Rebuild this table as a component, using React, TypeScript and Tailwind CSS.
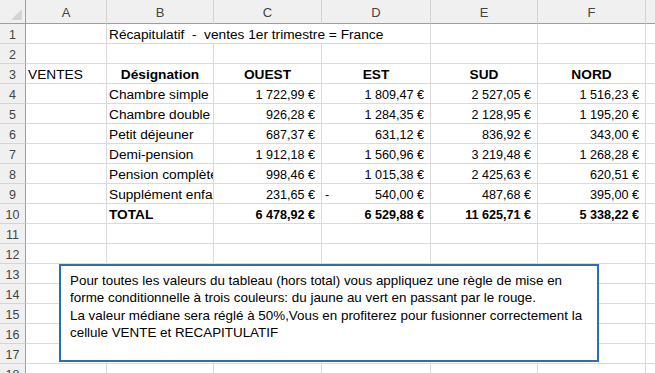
import React from "react";

type Cell = {
  text?: string;
  bold?: boolean;
  align?: "left" | "right" | "center";
  span?: number;
  dash?: boolean;
};

const cols = ["A", "B", "C", "D", "E", "F"];

const money = (v: string, bold = false, dash = false): Cell => ({
  text: v,
  align: "right",
  bold,
  dash,
});

// rows 1..18, each one holds cells for A..F
const rows: Cell[][] = [
  [{}, { text: "Récapitulatif  -  ventes 1er trimestre = France", span: 3 }, {}, {}],
  [{}, {}, {}, {}, {}, {}],
  [
    { text: "VENTES" },
    { text: "Désignation", bold: true, align: "center" },
    { text: "OUEST", bold: true, align: "center" },
    { text: "EST", bold: true, align: "center" },
    { text: "SUD", bold: true, align: "center" },
    { text: "NORD", bold: true, align: "center" },
  ],
  [{}, { text: "Chambre simple" }, money("1 722,99 €"), money("1 809,47 €"), money("2 527,05 €"), money("1 516,23 €")],
  [{}, { text: "Chambre double" }, money("926,28 €"), money("1 284,35 €"), money("2 128,95 €"), money("1 195,20 €")],
  [{}, { text: "Petit déjeuner" }, money("687,37 €"), money("631,12 €"), money("836,92 €"), money("343,00 €")],
  [{}, { text: "Demi-pension" }, money("1 912,18 €"), money("1 560,96 €"), money("3 219,48 €"), money("1 268,28 €")],
  [{}, { text: "Pension complète" }, money("998,46 €"), money("1 015,38 €"), money("2 425,63 €"), money("620,51 €")],
  [{}, { text: "Supplément enfant" }, money("231,65 €"), money("540,00 €", false, true), money("487,68 €"), money("395,00 €")],
  [{}, { text: "TOTAL", bold: true }, money("6 478,92 €", true), money("6 529,88 €", true), money("11 625,71 €", true), money("5 338,22 €", true)],
  [{}, {}, {}, {}, {}, {}],
  [{}, {}, {}, {}, {}, {}],
  [{}, {}, {}, {}, {}, {}],
  [{}, {}, {}, {}, {}, {}],
  [{}, {}, {}, {}, {}, {}],
  [{}, {}, {}, {}, {}, {}],
  [{}, {}, {}, {}, {}, {}],
  [{}, {}, {}, {}, {}, {}],
];

function SheetCell({ cell }: { cell: Cell }) {
  const span = cell.span === 3 ? "col-span-3" : "";
  const justify =
    cell.align === "right"
      ? "justify-end pr-[6px]"
      : cell.align === "center"
      ? "justify-center"
      : "justify-start pl-[2px]";
  const isNumber = cell.align === "right";
  return (
    <div
      className={`h-5 pt-[3px] flex items-center overflow-hidden whitespace-pre border-r border-b border-[#dadada] text-black ${span} ${justify} ${
        cell.bold ? "font-bold" : ""
      } ${isNumber ? "text-[12.6px]" : "text-[13.7px]"}`}
    >
      {cell.dash ? (
        <div className="flex w-full justify-between pl-[3px]">
          <span>-</span>
          <span>{cell.text}</span>
        </div>
      ) : (
        cell.text
      )}
    </div>
  );
}

export default function App() {
  return (
    <div className="relative w-[655px] h-[373px] overflow-hidden bg-white font-['Liberation_Sans',Arial,sans-serif]">
      <div className="grid grid-cols-[26px_81px_107px_108px_109px_107px_108px_1fr]">
        {/* corner */}
        <div className="h-6 bg-[#f0f0f0] border-r border-b border-[#9e9e9e] relative">
          <svg className="absolute right-[3px] bottom-[3px]" width="11" height="11" viewBox="0 0 11 11">
            <polygon points="11,0 11,11 0,11" fill="#d4d4d4" />
          </svg>
        </div>
        {cols.map((c) => (
          <div
            key={c}
            className="h-6 pt-[3px] bg-[#f0f0f0] border-r border-r-[#d4d4d4] border-b border-b-[#9e9e9e] flex items-center justify-center text-[13px] text-[#444]"
          >
            {c}
          </div>
        ))}
        <div className="h-6 bg-[#f0f0f0] border-b border-[#9e9e9e]" />

        {rows.map((row, i) => (
          <React.Fragment key={i}>
            <div className="h-5 pt-[3px] bg-[#f0f0f0] border-r border-r-[#9e9e9e] border-b border-b-[#d4d4d4] flex items-center justify-center text-[12.5px] text-[#444]">
              {i + 1}
            </div>
            {row.map((cell, j) => (
              <SheetCell key={j} cell={cell} />
            ))}
            <div className="h-5 border-b border-[#dadada]" />
          </React.Fragment>
        ))}
      </div>

      {/* text box over the sheet */}
      <div className="absolute left-[59px] top-[264px] w-[540px] h-[98px] bg-white border-2 border-[#2a6fb4] pl-[9px] pt-[6px] text-[13.4px] leading-[17.3px] text-black whitespace-nowrap">
        Pour toutes les valeurs du tableau (hors total) vous appliquez une règle de mise en
        <br />
        forme conditionnelle à trois couleurs: du jaune au vert en passant par le rouge.
        <br />
        La valeur médiane sera réglé à 50%,Vous en profiterez pour fusionner correctement la
        <br />
        cellule VENTE et RECAPITULATIF
      </div>
    </div>
  );
}
